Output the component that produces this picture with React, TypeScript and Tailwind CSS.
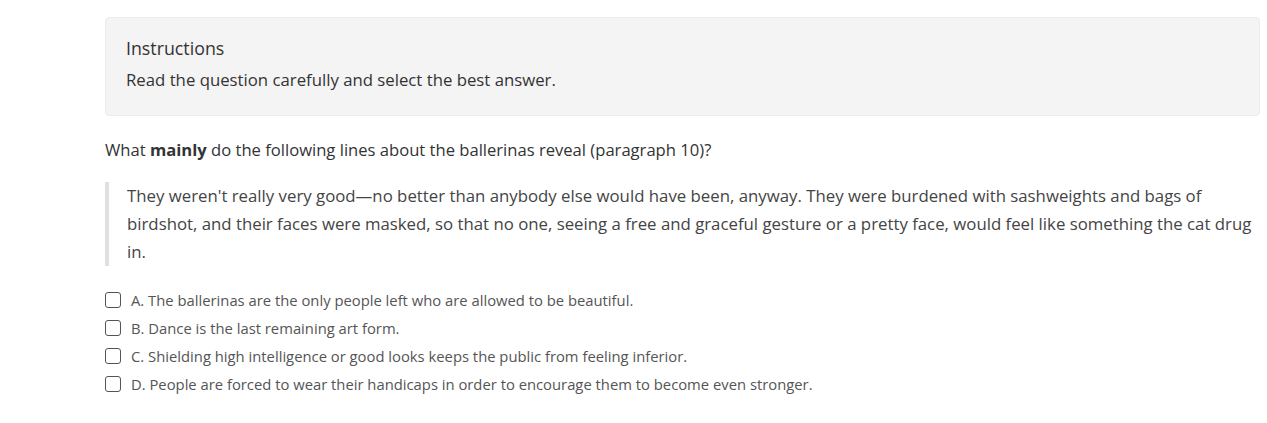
import React from "react";

const options = [
  "A. The ballerinas are the only people left who are allowed to be beautiful.",
  "B. Dance is the last remaining art form.",
  "C. Shielding high intelligence or good looks keeps the public from feeling inferior.",
  "D. People are forced to wear their handicaps in order to encourage them to become even stronger.",
];

export default function App() {
  return (
    <div
      className="min-h-[423px] bg-white pl-[105px] pr-[7px] pt-[17px] text-[#333]"
      style={{ fontFamily: "'Open Sans', Lato, sans-serif" }}
    >
      <div className="rounded-[4px] border border-[#ececec] bg-[#f4f4f4] px-[20px] pt-[18px] pb-[23px]">
        <div className="text-[17.8px] leading-[24px] text-[#333]">Instructions</div>
        <div className="mt-[8px] text-[16.75px] leading-[24px] text-[#333]">
          Read the question carefully and select the best answer.
        </div>
      </div>
      <div className="mt-[22px] text-[16.6px] leading-[24px] text-[#333]">
        What <b className="font-bold">mainly</b> do the following lines about the ballerinas reveal (paragraph 10)?
      </div>
      <div className="mt-[20px] border-l-[4px] border-[#e0e0e0] pl-[18px] text-[16.8px] leading-[28px] text-[#444]">
        They weren't really very good—no better than anybody else would have been, anyway. They were burdened with sashweights and bags of birdshot, and their faces were masked, so that no one, seeing a free and graceful gesture or a pretty face, would feel like something the cat drug in.
      </div>
      <div className="mt-[20px] flex flex-col">
        {options.map((o) => (
          <label key={o} className="flex h-[28px] items-center text-[14.8px] text-[#555]">
            <span className="mr-[10px] inline-block h-[16px] w-[16px] rounded-[3px] border-[1.5px] border-[#555] bg-white" />
            {o}
          </label>
        ))}
      </div>
    </div>
  );
}
